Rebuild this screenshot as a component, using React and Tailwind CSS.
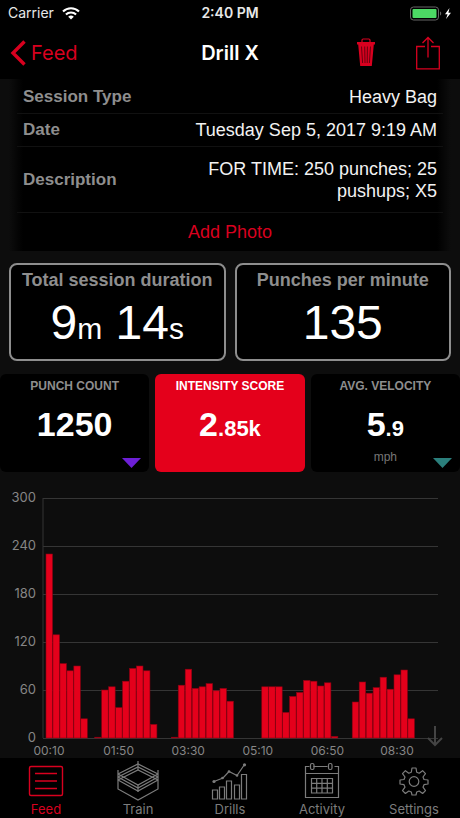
import React from 'react';

const PUNCHES = [
  230, 129, 93, 84, 90, 24, 0, 1, 60, 64, 38, 71, 87, 90, 84, 17, 0, 0, 1,
  66, 86, 62, 64, 68, 59, 62, 46, 0, 0, 0, 0, 64, 64, 64, 32, 52, 57, 72, 71,
  65, 69, 2, 0, 0, 45, 70, 56, 63, 76, 61, 79, 85, 24,
];
const TICKS = [300, 240, 180, 120, 60, 0];
const TIMES = ['00:10', '01:50', '03:30', '05:10', '06:50', '08:30'];

// chart geometry, in viewBox units
const LEFT = 43;
const RIGHT = 438;
const BASE = 252;
const STEP = 6.96;
const yOf = (v) => BASE - v * 0.8;

function StatusBar() {
  return (
    <div className="grid grid-cols-3 items-center h-[26px] px-2 font-['Inter',sans-serif] text-sm text-[#e8e8e8]">
      <div className="flex items-center gap-2">
        <span>Carrier</span>
        <svg width="18" height="13" viewBox="0 0 18 13" fill="none" stroke="#fff" strokeWidth="2.1">
          <path d="M1 4.6a11.4 11.4 0 0 1 16 0" />
          <path d="M3.9 7.6a7.3 7.3 0 0 1 10.2 0" />
          <path d="M9 12.6 6.2 9.8a4 4 0 0 1 5.6 0z" fill="#fff" stroke="none" />
        </svg>
      </div>
      <span className="text-center font-semibold">2:40 PM</span>
      <svg className="justify-self-end" width="44" height="15" viewBox="0 0 44 15">
        <rect x="2.5" y="1" width="28" height="13" rx="3" fill="none" stroke="#666" />
        <rect x="4.5" y="3" width="24" height="9" rx="1" fill="#4cd964" />
        <path d="M32 5.5c1.6.4 1.6 3.6 0 4z" fill="#666" />
        <path d="M41.5 2 37 8.2h2.6L38 13l5-6.3h-2.6z" fill="#fff" />
      </svg>
    </div>
  );
}

function NavBar() {
  return (
    <header className="grid grid-cols-3 items-center h-[53px] px-2.5 font-['Inter',sans-serif]">
      <a href="#feed" className="flex items-center gap-1 text-xl text-[#d8001f]">
        <svg width="17" height="26" viewBox="0 0 17 26" fill="none" stroke="currentColor" strokeWidth="3.4">
          <path d="M14.5 1.5 3 13l11.5 11.5" />
        </svg>
        Feed
      </a>
      <h1 className="text-center text-xl font-semibold text-white">Drill X</h1>
      <div className="flex items-center justify-end gap-10 pr-2.5 text-[#d8001f]">
        <button aria-label="Delete session">
          <svg width="20" height="30" viewBox="0 0 20 30" fill="none" stroke="currentColor">
            <path d="M6 4V2.2Q6 1 7.2 1h5.6Q14 1 14 2.2V4" strokeWidth="1.2" />
            <path d="M1 4h18v2.6h-1.2L15.8 28H4.2L2.2 6.6H1z" fill="currentColor" stroke="none" />
            <path d="M5.5 8.5 6.6 25M8.7 8.5 9 25M11.4 8.5 11.2 25M14.5 8.5 13.4 25" stroke="#4a000b" strokeWidth="0.8" />
          </svg>
        </button>
        <button aria-label="Share session">
          <svg width="24" height="34" viewBox="0 0 24 34" fill="none" stroke="currentColor" strokeWidth="1.3">
            <path d="M9 10.5H.7v22.3h22.6V10.5H15M12 21.5V1.5M6.5 7 12 1.5 17.5 7" />
          </svg>
        </button>
      </div>
    </header>
  );
}

function DetailRow({ label, children, tall }) {
  return (
    <div className={'flex items-center justify-between border-b border-[#111] px-1.5 ' + (tall ? 'h-[66px]' : 'h-[33px]')}>
      <dt className="text-[17px] font-bold text-[#8e8e8e]">{label}</dt>
      <dd className="max-w-[256px] text-right text-[#f2f2f2]">{children}</dd>
    </div>
  );
}

function Details() {
  return (
    <section className="mx-[9px] bg-[linear-gradient(to_right,#0d0d0d,#000_14px,#000_calc(100%-14px),#0d0d0d)] px-2 pt-0.5 text-lg leading-[22px]">
      <dl>
        <DetailRow label="Session Type">Heavy Bag</DetailRow>
        <DetailRow label="Date">Tuesday Sep 5, 2017 9:19 AM</DetailRow>
        <DetailRow label="Description" tall>FOR TIME: 250 punches; 25 pushups; X5</DetailRow>
      </dl>
      <button className="block w-full h-[38px] text-[#d8001f]">Add Photo</button>
    </section>
  );
}

function SummaryCard({ title, children }) {
  return (
    <div className="h-[98px] rounded-lg border-2 border-[#8e8e8e] bg-black pt-1 text-center">
      <h2 className="text-lg leading-[22px] font-bold text-[#8e8e8e]">{title}</h2>
      <p className="mt-1 text-5xl leading-[56px] text-white">{children}</p>
    </div>
  );
}

function StatTile({ title, whole, rest, unit, active, marker }) {
  return (
    <button className={'relative flex flex-col items-center h-[98px] rounded-md pt-1 text-white ' + (active ? 'bg-[#e4001b]' : 'bg-black')}>
      <span className={'text-xs leading-4 font-bold ' + (active ? 'text-white' : 'text-[#8e8e8e]')}>{title}</span>
      <span className="mt-2.5 text-[34px] leading-10 font-bold">
        {whole}<span className="text-[22px]">{rest}</span>
      </span>
      {unit && <span className="text-xs leading-4 text-[#777]">{unit}</span>}
      {marker && (
        <svg className={'absolute bottom-1 right-2 ' + marker} width="19" height="10" viewBox="0 0 19 10" fill="currentColor">
          <path d="M0 0h19L9.5 10z" />
        </svg>
      )}
    </button>
  );
}

function PunchChart() {
  return (
    <svg className="block w-full" viewBox="0 0 460 271" role="img" aria-label="Punches over time">
      <g stroke="#353535">
        {TICKS.map((t) => (
          <line key={t} x1={LEFT} x2={RIGHT} y1={yOf(t) + 0.5} y2={yOf(t) + 0.5} />
        ))}
        <line x1={LEFT} x2={LEFT} y1={yOf(300)} y2={BASE} />
      </g>
      <g fill="#e4001b" stroke="#8d0012" strokeWidth="0.6">
        {PUNCHES.map((v, i) => v > 0 && (
          <rect key={i} x={46 + i * STEP} y={yOf(v)} width="6.5" height={v * 0.8} />
        ))}
      </g>
      <g fill="#868686" fontSize="13" textAnchor="end" className="font-['Inter',sans-serif]">
        {TICKS.map((t) => <text key={t} x="36" y={yOf(t) + 4}>{t}</text>)}
      </g>
      <g fill="#868686" fontSize="12" textAnchor="middle" className="font-['Inter',sans-serif]">
        {TIMES.map((t, i) => <text key={t} x={49 + i * STEP * 10} y="269">{t}</text>)}
      </g>
      <path d="M435 240v19M428 252l7 7 7-7" fill="none" stroke="#444" strokeWidth="2" />
    </svg>
  );
}

const ICONS = {
  Feed: (
    <>
      <rect x="5.5" y="4.5" width="33" height="29" rx="1.5" strokeWidth="1.4" />
      <path d="M11 11.5h22M11 19h22M11 26.5h22" strokeWidth="1.4" />
    </>
  ),
  Train: (
    <>
      <path d="M2 12 22 2l20 10M2 15 22 5l20 10M2 18 22 8l20 10" />
      <path d="M2 12l20 11 20-11M2 15l20 11 20-11M2 18l20 11 20-11" />
      <path d="M2 8v19l20 11 20-11V8M22-1V8M22 23v7" />
    </>
  ),
  Drills: (
    <>
      <path d="M4.5 28h5v9h-5zM11.5 25h5v12h-5zM18.5 19h5v18h-5zM26.5 23h5v14h-5zM33.5 12.5h5V37h-5z" />
      <path d="m6 19.5 9-3.5 6-6.5 8 4 7.5-11" />
      <g fill="currentColor" stroke="none">
        <circle cx="6" cy="19.5" r="1.6" />
        <circle cx="14.5" cy="16" r="1.3" />
        <circle cx="21" cy="9.5" r="1.3" />
        <circle cx="29" cy="13.5" r="1.3" />
        <circle cx="36.5" cy="2.8" r="1.6" />
      </g>
    </>
  ),
  Activity: (
    <>
      <path d="M9.5 4.5h-4v31h33v-31h-4M13.5 4.5h14M5.5 11.5h33" />
      <rect x="10.5" y="1.5" width="3.5" height="6" rx="1.5" />
      <rect x="28.5" y="1.5" width="3.5" height="6" rx="1.5" />
      <path d="M11.5 16.5h21v14.5h-21zM11.5 21.3h21M11.5 26.2h21M16.7 16.5V31M22 16.5V31M27.3 16.5V31" />
    </>
  ),
  Settings: (
    <>
      <path d="M20 6h4l.7 4.2 2.5 1 3.4-2.5 2.900 2.900-2.500 3.400 1 2.500L36 18v4l-4 .7-1 2.500 2.500 3.400-2.900 2.900-3.400-2.500-2.500 1L24 33h-4l-.7-3-2.500-1-3.400 2.500-2.900-2.900 2.500-3.400-1-2.500L8 22v-4l4-.5 1-2.500-2.500-3.400 2.900-2.900 3.400 2.500 2.500-1z" strokeLinejoin="round" />
      <circle cx="22" cy="19.5" r="4.8" />
    </>
  ),
};

function TabBar() {
  return (
    <nav className="sticky bottom-0 grid grid-cols-5 h-[60px] bg-black font-['Inter',sans-serif]">
      {Object.keys(ICONS).map((name) => (
        <a key={name} href={'#' + name.toLowerCase()}
          className={'flex flex-col items-center pt-1 ' + (name === 'Feed' ? 'text-[#d8001f]' : 'text-[#7c7c7c]')}>
          <svg className="overflow-visible" width="44" height="39" viewBox="0 0 44 39" fill="none" stroke="currentColor" strokeWidth="1.2">{ICONS[name]}</svg>
          <span className="text-[13px] leading-4">{name}</span>
        </a>
      ))}
    </nav>
  );
}

export default function App() {
  return (
    <div className="flex flex-col min-h-screen bg-[#0d0d0d] font-['Liberation_Sans',Arial,sans-serif]">
      <div className="bg-black">
        <StatusBar />
        <NavBar />
      </div>
      <main className="flex-1">
        <Details />
        <div className="grid grid-cols-2 gap-[9px] px-[9px] pt-3">
          <SummaryCard title="Total session duration">
            9<span className="text-3xl">m</span> 14<span className="text-3xl">s</span>
          </SummaryCard>
          <SummaryCard title="Punches per minute">135</SummaryCard>
        </div>
        <div className="grid grid-cols-3 gap-1.5 pt-[13px] pb-[14px]">
          <StatTile title="PUNCH COUNT" whole="1250" marker="text-[#6d1fd6]" />
          <StatTile title="INTENSITY SCORE" whole="2" rest=".85k" active />
          <StatTile title="AVG. VELOCITY" whole="5" rest=".9" unit="mph" marker="text-[#2b7f7c]" />
        </div>
        <PunchChart />
      </main>
      <TabBar />
    </div>
  );
}
